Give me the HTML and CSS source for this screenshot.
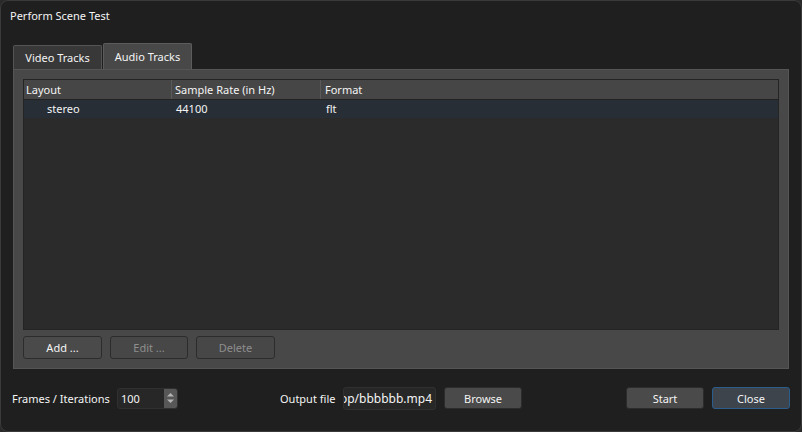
FILE: index.html
```html
<!DOCTYPE html>
<html>
<head>
<meta charset="utf-8">
<link rel="stylesheet" href="styles.css">
</head>
<body>
<div class="window">
  <div class="title">Perform Scene Test</div>
  <div class="tabbar">
    <div class="tab">Video Tracks</div>
    <div class="tab active">Audio Tracks</div>
  </div>
  <div class="pane">
    <div class="table">
      <div class="thead">
        <div class="th c1">Layout</div>
        <div class="th c2">Sample Rate (in Hz)</div>
        <div class="th c3">Format</div>
      </div>
      <div class="row sel">
        <div class="td c1 indent">stereo</div>
        <div class="td c2">44100</div>
        <div class="td c3">flt</div>
      </div>
    </div>
    <div class="btnrow">
      <div class="btn">Add ...</div>
      <div class="btn disabled">Edit ...</div>
      <div class="btn disabled">Delete</div>
    </div>
  </div>
  <div class="bottom">
    <div class="label frames">Frames / Iterations</div>
    <div class="spin">
      <div class="spinval">100</div>
      <div class="spinbtns">
        <svg width="9" height="14" viewBox="0 0 9 14"><path d="M1 5.5 L4.5 2 L8 5.5 Z" fill="#b4b4b4"/><path d="M1 8.5 L4.5 12 L8 8.5 Z" fill="#b4b4b4"/></svg>
      </div>
    </div>
    <div class="label outlabel">Output file</div>
    <div class="lineedit"><span>top/bbbbbb.mp4</span></div>
    <div class="btn browse">Browse</div>
    <div class="spacer"></div>
    <div class="btn start">Start</div>
    <div class="btn close">Close</div>
  </div>
</div>
</body>
</html>
```

FILE: styles.css
```css
* { box-sizing: border-box; }
html, body { margin: 0; padding: 0; background: #2a2a2a; }
body {
  font-family: "Noto Sans", "Open Sans", sans-serif;
  font-size: 11px;
  color: #f4f4f4;
}
.window {
  width: 802px;
  height: 432px;
  background: #1f1f1f;
  border: 1px solid #3a3a3a;
  border-radius: 8px;
  display: flex;
  flex-direction: column;
  overflow: hidden;
}
.title {
  height: 28px;
  line-height: 29px;
  padding-left: 9px;
}
.tabbar {
  margin-top: 14px;
  margin-left: 12px;
  height: 26px;
  display: flex;
  align-items: flex-end;
  gap: 1px;
}
.tab {
  width: 89px;
  height: 24px;
  line-height: 24px;
  text-align: center;
  background: #383838;
  border: 1px solid #545454;
  border-bottom: none;
  border-radius: 2px 2px 0 0;
}
.tab.active {
  height: 26px;
  line-height: 25px;
  background: #484848;
  border-color: #5c5c5c;
}
.pane {
  margin-left: 12px;
  width: 776px;
  height: 300px;
  background: #484848;
  border: 1px solid #555555;
  padding: 9px;
  display: flex;
  flex-direction: column;
}
.table {
  height: 251px;
  background: #2b2b2b;
  border: 1px solid #242424;
}
.thead {
  display: flex;
  height: 20px;
  background: #464646;
  border-bottom: 1px solid #222222;
}
.th {
  line-height: 20px;
  padding-left: 2px;
  border-right: 1px solid #5a5a5a;
}
.th.c3 { border-right: none; }
.c1 { width: 149px; }
.c2 { width: 149px; padding-left: 3px; }
.th.c1 { width: 148px; }
.th.c2 { width: 149px; padding-left: 3px; }
.c3 { flex: 1; padding-left: 4px; }
.row {
  display: flex;
  height: 18px;
}
.row.sel { background: #272e36; }
.td { line-height: 18px; }
.td.c1 { padding-left: 23px; }
.btnrow {
  margin-top: 6px;
  display: flex;
  gap: 8px;
}
.btn {
  width: 79px;
  height: 23px;
  line-height: 22px;
  text-align: center;
  background: #4a4a4a;
  border: 1px solid #2c2c2c;
  border-radius: 3px;
  flex-shrink: 0;
}
.btn.disabled { color: #8e8e8e; background: #474747; }
.btnrow .btn:nth-child(2) { width: 78px; }
.bottom {
  flex: 1;
  display: flex;
  align-items: center;
  padding-left: 11px;
  padding-bottom: 4px;
}
.label { white-space: nowrap; flex-shrink: 0; }
.frames { width: 105px; }
.spin {
  width: 61px;
  height: 21px;
  flex-shrink: 0;
  display: flex;
  background: #272727;
  border: 1px solid #303030;
  border-radius: 3px;
  overflow: hidden;
}
.spinval {
  flex: 1;
  line-height: 20px;
  padding-left: 3px;
}
.spinbtns {
  width: 13px;
  background: #575757;
  display: flex;
  align-items: center;
  justify-content: center;
}
.outlabel { margin-left: 102px; width: 63px; }
.lineedit {
  width: 93px;
  height: 23px;
  flex-shrink: 0;
  background: #272727;
  border: 1px solid #303030;
  border-radius: 3px;
  display: flex;
  justify-content: flex-end;
  overflow: hidden;
  line-height: 22px;
  padding-right: 3px;
  white-space: nowrap;
  font-size: 12px;
}
.browse { margin-left: 8px; width: 78px; height: 22px; line-height: 21px; }
.spacer { flex: 1; }
.start { width: 78px; height: 22px; line-height: 21px; }
.close {
  margin-left: 8px;
  margin-right: 11px;
  width: 78px;
  height: 22px;
  line-height: 21px;
  background: #3d444c;
  border-color: #2a5c8c;
}
```
